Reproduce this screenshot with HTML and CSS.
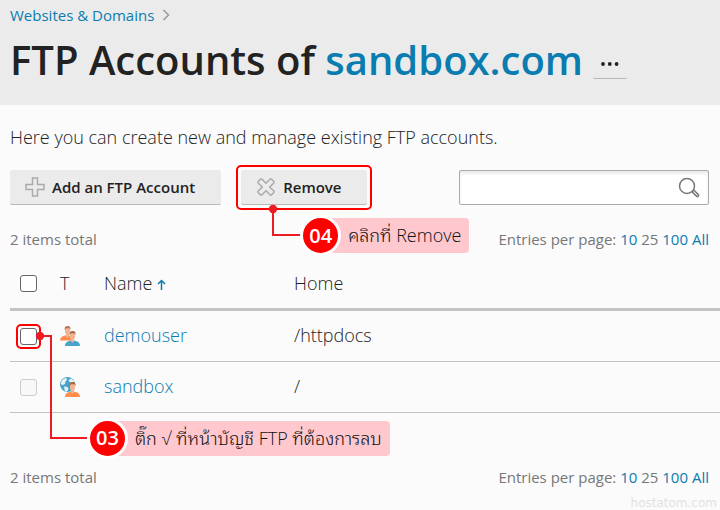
FILE: index.html
```html
<!DOCTYPE html>
<html lang="en">
<head>
<meta charset="utf-8">
<title>FTP Accounts of sandbox.com</title>
<link rel="stylesheet" href="styles.css">
</head>
<body>
<header class="page-header">
  <nav class="breadcrumb" aria-label="Breadcrumb">
    <a href="#">Websites &amp; Domains</a>
    <svg class="chevron" width="8" height="12" viewBox="0 0 8 12" aria-hidden="true"><path d="M1.500 1 6.500 6l-5 5"/></svg>
  </nav>
  <div class="title-row">
    <h1>FTP Accounts of <a href="#">sandbox.com</a></h1>
    <button class="more" type="button" aria-label="More domains">
      <svg width="18" height="4" viewBox="0 0 18 4"><circle cx="2" cy="2" r="1.900"/><circle cx="8.800" cy="2" r="1.900"/><circle cx="15.600" cy="2" r="1.900"/></svg>
    </button>
  </div>
</header>
<main class="content">
  <p class="intro">Here you can create new and manage existing FTP accounts.</p>
  <div class="toolbar">
    <button class="btn btn-add" type="button">
      <svg width="20" height="20" viewBox="0 0 20 20" aria-hidden="true"><path d="M7.500 1h5v6.500H19v5h-6.500V19h-5v-6.500H1v-5h6.500z"/></svg>
      Add an FTP Account
    </button>
    <div class="highlight-host">
      <button class="btn btn-remove" type="button">
        <svg width="20" height="20" viewBox="0 0 20 20" aria-hidden="true"><path d="M2.200 4.400 4.400 2.200Q5.200 1.500 6 2.200L10 6.300l4-4.100q.8-.7 1.600 0l2.200 2.200q.7.800 0 1.600L13.700 10l4.100 4q.7.800 0 1.600l-2.200 2.200q-.8.700-1.600 0L10 13.700l-4 4.100q-.8.700-1.600 0l-2.200-2.200q-.7-.8 0-1.600l4.100-4-4.100-4q-.7-.8 0-1.600z"/></svg>
        Remove
      </button>
      <span class="ring ring-button"></span>
      <svg class="lead lead-remove" width="40" height="34" viewBox="0 0 40 34" aria-hidden="true"><circle cx="5" cy="5" r="4.200"/><path d="M5 5v26h30"/></svg>
      <div class="callout callout-remove"><b class="step">04</b><span class="note" lang="th">คลิกที่ Remove</span></div>
    </div>
    <form class="search">
      <input type="text" aria-label="Search">
      <button type="button" aria-label="Find">
        <svg width="22" height="22" viewBox="0 0 22 22"><circle cx="9" cy="9" r="7.500"/><path d="m14.600 14.200 1.200-1.200 4.600 4.700q.5.800-.2 1.500t-1.500.2L14 14.800z"/></svg>
      </button>
    </form>
  </div>
  <div class="summary">
    <span>2 items total</span>
    <span>Entries per page: <a href="#">10</a> 25 <a href="#">100</a> <a href="#">All</a></span>
  </div>
  <div class="table-wrap">
  <table class="accounts">
    <thead>
      <tr>
        <th class="col-check"><input type="checkbox" aria-label="Select all"></th>
        <th class="col-type">T</th>
        <th class="col-name">Name <svg width="9" height="11" viewBox="0 0 9 11" aria-hidden="true"><path d="M4.500 11V1.500M1 5l3.500-3.500L8 5"/></svg></th>
        <th>Home</th>
      </tr>
    </thead>
    <tbody>
      <tr>
        <td class="col-check">
          <div class="highlight-host">
            <input type="checkbox" aria-label="Select demouser">
            <span class="ring ring-check"></span>
            <svg class="lead lead-check" width="52" height="110" viewBox="0 0 52 110" aria-hidden="true"><circle cx="5" cy="5" r="4.200"/><path d="M5 5h11v102h36"/></svg>
            <div class="callout callout-check"><b class="step">03</b><span class="note" lang="th">ติ๊ก √ ที่หน้าบัญชี FTP ที่ต้องการลบ</span></div>
          </div>
        </td>
        <td><svg class="type-icon" width="20" height="20" viewBox="0 0 20 20" aria-hidden="true"><path fill="#ff8c4b" d="M0 14.500Q.2 10.500 5 9.600h5l2 5z"/><path fill="#f0b593" d="M5 1.500h5v4q-.3 2.500-1.200 3v2L7.400 12 6 10.500v-2Q5 7.500 5 5z"/><path fill="#b5724c" d="M4.600 4q-.4-4 3-4t2.800 4l-.9-1.800H6z"/><path fill="#46a3cb" d="M5 20q0-4.500 5-5.300h5q5 .8 5 5.300z"/><path fill="#f0b593" d="M10 6.500h5v4q-.3 2.500-1 3v1.700l-1.500 1.500-1.500-1.500v-1.700q-1-1-1-3z"/><path fill="#a96541" d="M9.600 9q-.5-4 3-4t2.900 4l-1-1.800H11z"/></svg></td>
        <td class="text"><a href="#">demouser</a></td>
        <td class="text">/httpdocs</td>
      </tr>
      <tr>
        <td class="col-check"><input type="checkbox" aria-label="Select sandbox" disabled></td>
        <td><svg class="type-icon" width="20" height="20" viewBox="0 0 20 20" aria-hidden="true"><circle cx="7.500" cy="7.500" r="7.500" fill="#46a3cb"/><path fill="#e8f4f8" d="m2 3 4-2.200 1 1.700-1.700 2.200L5 7 2.200 8.200.7 6.500zM8.500 3l3-1.500 2.800 3L12 6 9.500 5zM4 9.500l3.500.5 1 2-1.500 2.500H5z"/><path fill="#ff8c4b" d="M5 20q0-4.500 5-5.300h5q5 .8 5 5.300z"/><path fill="#f0b593" d="M10 6.500h5v4q-.3 2.500-1 3v1.700l-1.500 1.500-1.500-1.500v-1.700q-1-1-1-3z"/><path fill="#a96541" d="M9.600 9q-.5-4 3-4t2.900 4l-1-1.800H11z"/></svg></td>
        <td class="text"><a href="#">sandbox</a></td>
        <td class="text">/</td>
      </tr>
    </tbody>
  </table>
  </div>
  <div class="summary summary-bottom">
    <span>2 items total</span>
    <span>Entries per page: <a href="#">10</a> 25 <a href="#">100</a> <a href="#">All</a></span>
  </div>
</main>
<footer class="watermark">hostatom.com</footer>
</body>
</html>
```
FILE: styles.css
```css
* { box-sizing: border-box; }
body {
  margin: 0;
  background: #fbfbfb;
  color: #222;
  font: 300 18px/24px "Open Sans", sans-serif;
}
a { color: #0a7cb0; text-decoration: none; }
button, input { font: inherit; color: inherit; margin: 0; }
svg { flex: none; fill: none; }

.page-header { background: #ebebeb; padding: 5px 10px 17px; }
.breadcrumb { display: flex; align-items: center; gap: 8px; font-size: 15px; line-height: 20px; font-weight: 400; }
.chevron { stroke: #999; stroke-width: 1.500; }
.title-row { display: flex; align-items: center; gap: 10px; margin-top: 8px; padding-bottom: 1px; }
h1 { margin: 0; font-size: 40px; line-height: 54px; font-weight: 600; }
.more {
  display: flex; align-items: center; justify-content: center;
  width: 34px; height: 30px; margin-top: 8px; padding: 0;
  border: 0; border-bottom: 1px solid #b8b8b8; border-radius: 2px; background: #ebebeb;
}
.more svg { fill: #222; }

.content { padding: 20px 11px 0 10px; }
.intro { margin: 0 0 21px; }
.toolbar { display: flex; }
.btn {
  display: flex; align-items: center; gap: 7px;
  height: 35px; padding: 0 25px 0 15px;
  border: 0; border-bottom: 1px solid #b8b8b8; border-radius: 2px;
  background: #ebebeb; font-size: 15px; font-weight: 600; white-space: nowrap;
}
.btn svg { stroke: #aaa; stroke-width: 1.500; }
.btn-add { margin-right: 20px; padding-right: 26px; }
.highlight-host { position: relative; }
.search {
  display: flex; align-items: center; width: 250px; height: 35px; margin-left: auto;
  border: 1px solid #aaa; border-radius: 2px; background: #fff;
  box-shadow: inset 0 3px 3px #ececec;
}
.search input { flex: 1; min-width: 0; height: 33px; padding: 0 8px; border: 0; background: none; outline: 0; }
.search button { display: flex; padding: 0 8px; border: 0; background: none; }
.search svg { stroke: #777; stroke-width: 1.500; }

.summary {
  display: flex; justify-content: space-between;
  margin: 24px 0 9px; font-size: 15px; line-height: 20px; font-weight: 400; color: #777;
}
.summary-bottom { margin: 54px 0 0; }

.table-wrap { margin-right: -11px; }
.accounts { width: 100%; border-collapse: separate; border-spacing: 0; table-layout: fixed; }
th, td { height: 51px; padding: 0; text-align: left; font-weight: inherit; border-bottom: 1px solid #c3c3c3; }
th { height: 53px; border-bottom: 3px solid #c3c3c3; }
td.text { padding-bottom: 2px; }
.col-check { width: 50px; padding-left: 10px; }
.col-type { width: 44px; }
.col-name { width: 190px; }
.col-name svg { stroke: #0a7cb0; stroke-width: 1.500; }
.type-icon { display: block; }
input[type="checkbox"] {
  appearance: none; display: block; width: 17px; height: 17px;
  border: 1px solid #666; border-radius: 3px; background: #fff;
}
input[type="checkbox"]:disabled { border-color: #ccc; background: #f8f8f8; }

.ring { position: absolute; border: 2px solid #f00; border-radius: 5px; pointer-events: none; }
.ring-button { inset: -5px; }
.ring-check { left: -4px; top: -4px; width: 25px; height: 25px; }
.lead { position: absolute; stroke: #ed1c24; stroke-width: 2; }
.lead circle { fill: #ed1c24; stroke: none; }
.lead-remove { left: 27px; top: 34px; }
.lead-check { left: 15px; top: 3px; }
.callout { position: absolute; display: flex; align-items: center; white-space: nowrap; }
.callout-remove { left: 59px; top: 45px; }
.callout-check { left: 67px; top: 90px; }
.step {
  position: relative; display: grid; place-items: center; flex: none;
  width: 41px; height: 41px; border: 3px solid #fff; border-radius: 50%;
  background: #f00; color: #fff; font: 600 20px/24px "Open Sans", sans-serif;
}
.note {
  height: 35px; margin-left: -20px; padding: 0 8px 0 27px; border-radius: 4px;
  background: #ffc8cf; color: #111; font: 300 18px/35px "Open Sans", "Noto Sans Thai Looped", Loma, Waree, Garuda, sans-serif;
}
.watermark {
  padding: 7px 3px 0 0; text-align: right; color: #e2e2e2;
  font: 400 12px/18px "DejaVu Sans", sans-serif;
}
```
